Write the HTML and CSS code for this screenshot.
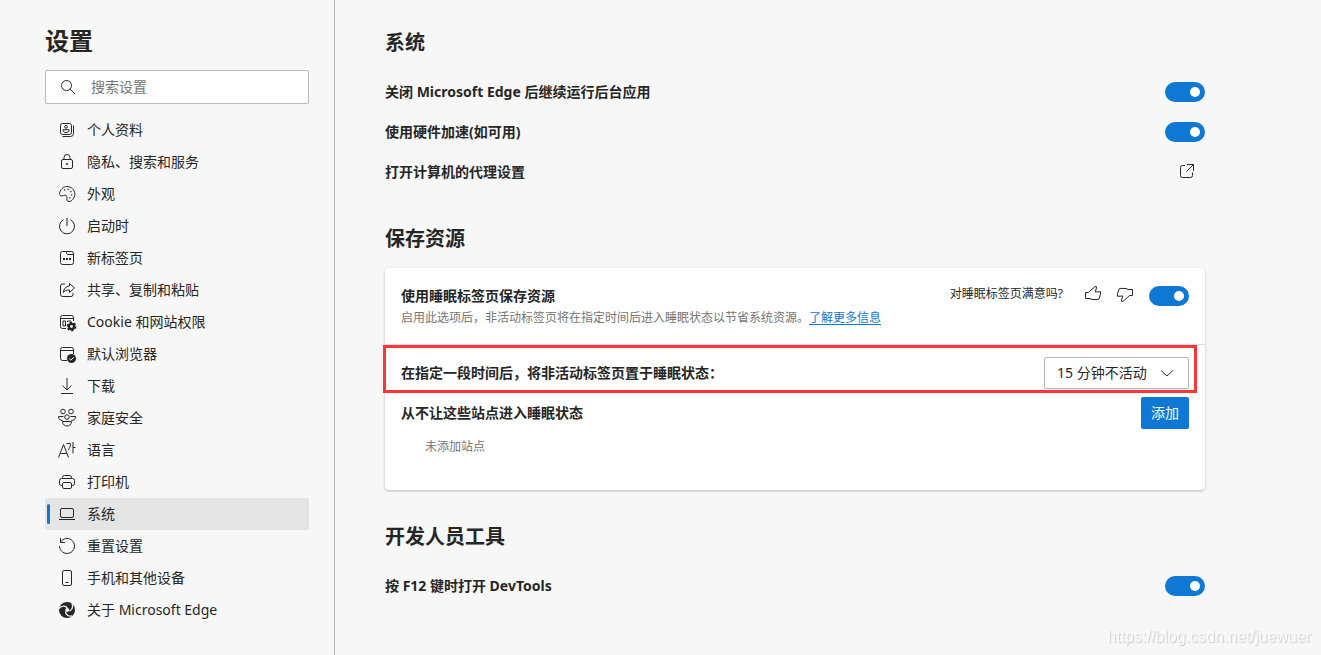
FILE: index.html
```html
<!DOCTYPE html>
<html lang="zh-CN">
<head>
<meta charset="utf-8">
<title>设置</title>
<link rel="stylesheet" href="styles.css">
</head>
<body>
<div class="app">
  <aside class="sidebar">
    <h1 class="page-title">设置</h1>
    <label class="search">
      <svg class="icon" viewBox="0 0 20 20" aria-hidden="true"><circle cx="8.5" cy="8.5" r="5"/><path d="M12.2 12.2 17 17"/></svg>
      <input class="search-input" type="search" placeholder="搜索设置" aria-label="搜索设置">
    </label>
    <nav class="nav">
      <a class="nav-item" href="#"><svg class="icon" viewBox="0 0 20 20"><rect x="3.5" y="3.5" width="11" height="11" rx="2"/><circle cx="9" cy="6.8" r="1.4"/><path d="M6 9.7h6v1c0 2.400-6 2.400-6 0zM16.500 5.500v8a3 3 0 0 1-3 3h-8"/></svg>个人资料</a>
      <a class="nav-item" href="#"><svg class="icon" viewBox="0 0 20 20"><rect x="4.5" y="7.500" width="11" height="9" rx="1.500"/><path d="M7 7.500V5.500a3 3 0 0 1 6 0v2"/><circle class="solid" cx="10" cy="12" r="1"/></svg>隐私、搜索和服务</a>
      <a class="nav-item" href="#"><svg class="icon" viewBox="0 0 20 20"><path d="M2.500 9.500C3 5.500 6.500 2.500 10 2.500c4.500 0 7.800 3.500 7.800 7.600 0 3.800-2.800 7.400-5.800 7.400-1.500 0-2.300-1-2.100-2.500.3-2.400-.2-3.800-1.800-3.900-1.300-.1-2 .9-3.200.9-1.500 0-2.500-1-2.400-2.500z"/><path class="solid" d="M7 5.300h1.300v1.300H7zM10.500 4.800h1.300v1.300h-1.300zM13.300 7h1.300v1.300h-1.300zM14 10.300h1.300v1.300H14zM12.300 13.300h1.300v1.300h-1.300z"/></svg>外观</a>
      <a class="nav-item" href="#"><svg class="icon" viewBox="0 0 20 20"><path d="M6.500 3.700a7.500 7.500 0 1 0 7 0M10 2v8"/></svg>启动时</a>
      <a class="nav-item" href="#"><svg class="icon" viewBox="0 0 20 20"><rect x="3.500" y="3.500" width="13" height="13" rx="2"/><path d="M9.500 3.500v1.200c0 1 .5 1.800 1.500 1.800h5.500"/><path class="solid" d="M6 10h2v2H6zM9 10h2v2H9zM12 10h2v2h-2z"/></svg>新标签页</a>
      <a class="nav-item" href="#"><svg class="icon" viewBox="0 0 20 20"><path d="M8 4H5.500a2 2 0 0 0-2 2v8.500a2 2 0 0 0 2 2h8.500a2 2 0 0 0 2-2V13M12.500 3.500l5 4.500-5 4.500V10C9.500 9.800 7.800 10.500 6.500 12.500c.2-4 2.500-6.300 6-6.500z"/></svg>共享、复制和粘贴</a>
      <a class="nav-item" href="#"><svg class="icon" viewBox="0 0 20 20"><path d="M9 16.500H5.500a2 2 0 0 1-2-2v-9a2 2 0 0 1 2-2h9a2 2 0 0 1 2 2V9M3.500 6.500h13M6 9h2.500v5H6zM10.500 10V9H14"/><circle class="solid" cx="14.500" cy="14.500" r="3.800"/><circle class="teeth" cx="14.500" cy="14.500" r="4"/><circle class="hole" cx="14.500" cy="14.500" r="1.400"/></svg>Cookie 和网站权限</a>
      <a class="nav-item" href="#"><svg class="icon" viewBox="0 0 20 20"><path d="M10 16.500H5.500a2 2 0 0 1-2-2v-9a2 2 0 0 1 2-2h9a2 2 0 0 1 2 2V10M3.500 6.500h13"/><circle class="solid" cx="14.500" cy="14.500" r="4.500"/><path class="light" d="m12.200 14.600 1.600 1.600 3-3"/></svg>默认浏览器</a>
      <a class="nav-item" href="#"><svg class="icon" viewBox="0 0 20 20"><path d="M10 2v12M5.500 9.500 10 14l4.500-4.500M4 17.500h12"/></svg>下载</a>
      <a class="nav-item" href="#"><svg class="icon" viewBox="0 0 20 20"><circle cx="6" cy="3.500" r="2.300"/><circle cx="14" cy="3.500" r="2.300"/><circle cx="10" cy="9" r="2.300"/><path d="M6.500 8.500h-5c0 2.500 1.500 4 4.200 4M13.500 8.500h5c0 2.500-1.500 4-4.200 4M5.500 13.500h9c0 6-9 6-9 0z"/></svg>家庭安全</a>
      <a class="nav-item" href="#"><svg class="icon" viewBox="0 0 20 20"><path d="M1.500 17.500 6.500 4.500l5 13M3.500 13.500h6M9.500 3.500h4c0 3-1 5-2.500 6.500M16 2v11.500M16 7.500h2.300"/></svg>语言</a>
      <a class="nav-item" href="#"><svg class="icon" viewBox="0 0 20 20"><path d="M5 13.500h-.5a2 2 0 0 1-2-2v-3a2 2 0 0 1 2-2h11a2 2 0 0 1 2 2v3a2 2 0 0 1-2 2H15M5.500 6.500v-1a2 2 0 0 1 2-2h5a2 2 0 0 1 2 2v1"/><rect x="5.500" y="10.500" width="9" height="6" rx="1.500"/></svg>打印机</a>
      <a class="nav-item current" href="#" aria-current="page"><svg class="icon" viewBox="0 0 20 20"><rect x="3.500" y="4.500" width="13" height="9" rx="1.500"/><path d="M2 15.500h16"/></svg>系统</a>
      <a class="nav-item" href="#"><svg class="icon" viewBox="0 0 20 20"><path d="M3.500 2v4.500H8M3.500 6.200A7.500 7.500 0 1 1 2.500 10"/></svg>重置设置</a>
      <a class="nav-item" href="#"><svg class="icon" viewBox="0 0 20 20"><rect x="5.500" y="2.500" width="9" height="15" rx="1.500"/><path d="M8.500 14.500h3"/></svg>手机和其他设备</a>
      <a class="nav-item" href="#"><svg class="icon" viewBox="0 0 20 20"><circle class="solid" cx="10" cy="10" r="8"/><path class="swirl" d="M2 8.500c3-3.500 7-2.500 8.300-.5M15 3.500c1.700 3.700-.3 6.600-2.700 7.500M15.500 16c-4 .8-7-1.500-7-4.500"/><circle class="hole" cx="10.200" cy="10" r="2"/></svg>关于 Microsoft Edge</a>
    </nav>
  </aside>

  <main class="main">
    <section class="section">
      <h2 class="section-title">系统</h2>
      <div class="row"><label class="label" for="background">关闭 Microsoft Edge 后继续运行后台应用</label><input class="toggle" id="background" type="checkbox" role="switch" checked></div>
      <div class="row"><label class="label" for="hardware">使用硬件加速(如可用)</label><input class="toggle" id="hardware" type="checkbox" role="switch" checked></div>
      <div class="row"><span class="label">打开计算机的代理设置</span><button class="icon-button external" type="button" aria-label="打开计算机的代理设置"><svg class="icon" viewBox="0 0 20 20"><path d="M8 3.500H5.500a2 2 0 0 0-2 2v8a2 2 0 0 0 2 2h8a2 2 0 0 0 2-2V10.500M10 2.500h6.500V9M16.500 2.500l-7 7"/></svg></button></div>
    </section>

    <section class="section">
      <h2 class="section-title">保存资源</h2>
      <div class="card">
        <div class="card-head">
          <div class="card-text">
            <label class="label" for="sleeping">使用睡眠标签页保存资源</label>
            <p class="hint">启用此选项后，非活动标签页将在指定时间后进入睡眠状态以节省系统资源。<a class="link" href="#">了解更多信息</a></p>
          </div>
          <div class="actions">
            <div class="feedback">
              <span class="question">对睡眠标签页满意吗?</span>
              <button class="icon-button" type="button" aria-label="满意"><svg class="icon" viewBox="0 0 20 20"><path d="M2.500 8.500h3L11.500 3l1.800-.5.200 1.500-1.300 4 5.300-.3v2.500L16 15l-1 .6-6-.1-2-1H2.500z"/></svg></button>
              <button class="icon-button" type="button" aria-label="不满意"><svg class="icon flipped" viewBox="0 0 20 20"><path d="M2.500 8.500h3L11.500 3l1.800-.5.200 1.500-1.300 4 5.300-.3v2.500L16 15l-1 .6-6-.1-2-1H2.500z"/></svg></button>
            </div>
            <input class="toggle" id="sleeping" type="checkbox" role="switch" checked>
          </div>
        </div>
        <div class="card-row highlighted">
          <label class="label" for="timeout">在指定一段时间后，将非活动标签页置于睡眠状态：</label>
          <div class="select-box">
            <select class="select" id="timeout"><option>15 分钟不活动</option></select>
            <svg class="icon chevron" viewBox="0 0 20 20"><path d="m4 7.500 6 5.500 6-5.500"/></svg>
          </div>
        </div>
        <div class="card-row">
          <span class="label">从不让这些站点进入睡眠状态</span>
          <button class="primary" type="button">添加</button>
        </div>
        <p class="empty">未添加站点</p>
      </div>
    </section>

    <section class="section">
      <h2 class="section-title">开发人员工具</h2>
      <div class="row"><label class="label" for="devtools">按 F12 键时打开 DevTools</label><input class="toggle" id="devtools" type="checkbox" role="switch" checked></div>
    </section>
  </main>
</div>
<div class="watermark">https://blog.csdn.net/juewuer</div>
</body>
</html>
```
FILE: styles.css
```css
* { box-sizing: border-box; }

body {
  margin: 0;
  background: #f7f7f7;
  color: #262626;
  font: 14px/20px "Noto Sans", "Noto Sans CJK SC", sans-serif;
}

h1, h2, p { margin: 0; }
input, select, button { font: inherit; color: inherit; }

.app { display: flex; min-height: 100vh; }

.sidebar {
  flex: none;
  width: 335px;
  padding: 24px 25px 0 45px;
  border-right: 1px solid #b4b4b4;
}
.page-title { font-size: 24px; line-height: 34px; margin-bottom: 12px; }

.icon {
  flex: none;
  display: block;
  width: 20px;
  height: 20px;
  fill: none;
  stroke: #262626;
  stroke-width: 1;
}
.solid { fill: #262626; stroke: none; }
.teeth { stroke-width: 1.8; stroke-dasharray: 2.09 2.1; }
.hole { fill: #f7f7f7; stroke: none; }
.light { stroke: #f7f7f7; }
.swirl { stroke: #f7f7f7; stroke-width: 1.3; }

.search {
  display: flex;
  align-items: center;
  gap: 13px;
  height: 34px;
  padding: 0 12px;
  background: #fff;
  border: 1px solid #bbb;
  border-radius: 2px;
}
.search-input {
  flex: 1;
  min-width: 0;
  padding: 0;
  border: 0;
  outline: 0;
  background: none;
}
.search-input::placeholder { color: #757575; }

.nav { display: flex; flex-direction: column; margin-top: 10px; }
.nav-item {
  display: flex;
  align-items: center;
  gap: 10px;
  height: 32px;
  padding-left: 12px;
  color: inherit;
  text-decoration: none;
}
.current {
  position: relative;
  background: #e5e5e5;
  border-radius: 2px;
}
.current::before {
  content: "";
  position: absolute;
  left: 2px;
  top: 6px;
  bottom: 6px;
  width: 3px;
  border-radius: 2px;
  background: #0f78d4;
}

.main {
  flex: 1;
  display: flex;
  flex-direction: column;
  gap: 32px;
  max-width: 920px;
  padding: 28px 50px;
}
.section-title { font-size: 20px; line-height: 30px; margin-bottom: 14px; }
.row, .card-row {
  display: flex;
  align-items: center;
  justify-content: space-between;
  height: 40px;
}
.label { font-weight: 700; }

.toggle {
  appearance: none;
  flex: none;
  display: flex;
  align-items: center;
  width: 40px;
  height: 20px;
  margin: 0;
  padding: 0 5px;
  border-radius: 10px;
  background: #767676;
}
.toggle:checked { justify-content: flex-end; background: #0f78d4; }
.toggle::before {
  content: "";
  width: 10px;
  height: 10px;
  border-radius: 50%;
  background: #fff;
}

.icon-button { padding: 0; border: 0; background: none; }
.external { margin-right: 8px; }
.flipped { transform: rotate(180deg); }

.card {
  background: #fff;
  border-radius: 4px;
  box-shadow: 0 1px 3px rgba(0, 0, 0, 0.26);
  padding-bottom: 32px;
}
.card-head {
  display: flex;
  justify-content: space-between;
  padding: 18px 16px 16px;
  border-bottom: 1px solid #ddd;
}
.card-text { display: flex; flex-direction: column; gap: 2px; }
.hint, .empty { font-size: 12px; line-height: 20px; color: #757575; }
.link { color: #0f78d4; text-decoration: underline; text-underline-offset: 2px; }
.actions { display: flex; height: 20px; align-items: center; gap: 14px; }
.feedback { display: flex; align-items: center; gap: 12px; padding-bottom: 5px; }
.question { font-size: 12px; margin-right: 8px; }

.card-row { padding: 0 16px; }
.highlighted { position: relative; height: 48px; padding-top: 8px; }
.highlighted::after {
  content: "";
  position: absolute;
  inset: 0 8px 0 -2px;
  border: 3px solid #fd3737;
  pointer-events: none;
}
.select-box { display: grid; align-items: center; }
.select-box > * { grid-area: 1 / 1; }
.select {
  appearance: none;
  height: 32px;
  padding: 0 41px 0 12px;
  background: #fff;
  border: 1px solid #b4b4b4;
  border-radius: 2px;
}
.chevron { justify-self: end; margin-right: 12px; pointer-events: none; }
.primary {
  height: 32px;
  padding: 0 10px;
  border: 0;
  border-radius: 2px;
  background: #0f78d4;
  color: #fff;
}
.empty { padding: 4px 40px 0; }
.card { padding-bottom: 33px; }

.watermark {
  position: fixed;
  right: 10px;
  bottom: 8px;
  font: 16px/20px "Liberation Sans", sans-serif;
  color: #f9f9f9;
  text-shadow: 1px 1px 1px #ccc;
}
```
